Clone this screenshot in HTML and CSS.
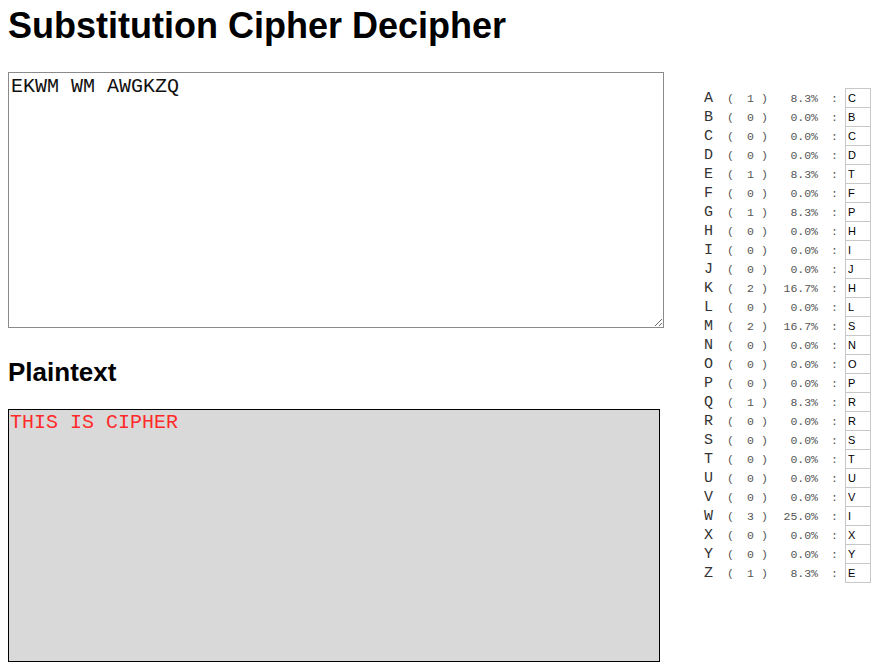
FILE: index.html
```html
<!DOCTYPE html>
<html>
<head>
<meta charset="utf-8">
<title>Substitution Cipher Decipher</title>
<link rel="stylesheet" href="styles.css">
</head>
<body>
<div class="page">
  <div class="main">
    <h1 class="title">Substitution Cipher Decipher</h1>
    <textarea class="cipher" spellcheck="false">EKWM WM AWGKZQ</textarea>
    <h2 class="subtitle">Plaintext</h2>
    <div class="plain">THIS IS CIPHER</div>
  </div>
  <div class="side" id="side"></div>
</div>
<script>
(function(){
  var rows = [
    ["A",1,"8.3%","C"],["B",0,"0.0%","B"],["C",0,"0.0%","C"],["D",0,"0.0%","D"],
    ["E",1,"8.3%","T"],["F",0,"0.0%","F"],["G",1,"8.3%","P"],["H",0,"0.0%","H"],
    ["I",0,"0.0%","I"],["J",0,"0.0%","J"],["K",2,"16.7%","H"],["L",0,"0.0%","L"],
    ["M",2,"16.7%","S"],["N",0,"0.0%","N"],["O",0,"0.0%","O"],["P",0,"0.0%","P"],
    ["Q",1,"8.3%","R"],["R",0,"0.0%","R"],["S",0,"0.0%","S"],["T",0,"0.0%","T"],
    ["U",0,"0.0%","U"],["V",0,"0.0%","V"],["W",3,"25.0%","I"],["X",0,"0.0%","X"],
    ["Y",0,"0.0%","Y"],["Z",1,"8.3%","E"]
  ];
  var side = document.getElementById("side");
  rows.forEach(function(r){
    var row = document.createElement("div");
    row.className = "row";
    row.innerHTML =
      '<span class="letter">'+r[0]+'</span>'+
      '<span class="paren">(</span>'+
      '<span class="count">'+r[1]+'</span>'+
      '<span class="paren2">)</span>'+
      '<span class="pct">'+r[2]+'</span>'+
      '<span class="colon">:</span>'+
      '<input class="map" type="text" value="'+r[3]+'">';
    side.appendChild(row);
  });
})();
</script>
</body>
</html>
```

FILE: styles.css
```css
html, body {
  margin: 0;
  padding: 0;
  background: #fff;
}
.page {
  display: flex;
  padding: 0 8px;
  gap: 40px;
}
.main {
  width: 656px;
  display: flex;
  flex-direction: column;
}
.title {
  font-family: "Liberation Sans", Arial, sans-serif;
  font-weight: bold;
  font-size: 36px;
  line-height: 40px;
  margin: 6px 0 26px;
  color: #000;
}
.cipher {
  box-sizing: border-box;
  width: 656px;
  height: 256px;
  margin: 0;
  padding: 2px;
  border: 1px solid #8a8a8a;
  font-family: "Liberation Mono", "Courier New", monospace;
  font-size: 20px;
  color: #111;
  resize: both;
  outline: none;
}
.subtitle {
  font-family: "Liberation Sans", Arial, sans-serif;
  font-weight: bold;
  font-size: 26px;
  line-height: 30px;
  margin: 29px 0 22px;
  color: #000;
}
.plain {
  box-sizing: border-box;
  width: 652px;
  height: 253px;
  border: 1px solid #000;
  background: #d9d9d9;
  padding: 2px 1px;
  font-family: "Liberation Mono", "Courier New", monospace;
  font-size: 20px;
  line-height: 22px;
  color: #ff2a2a;
}
.side {
  padding-top: 89px;
  display: flex;
  flex-direction: column;
}
.row {
  display: flex;
  align-items: center;
  height: 19px;
  font-family: "Liberation Mono", "Courier New", monospace;
  font-size: 11.5px;
  color: #555;
}
.letter {
  width: 23px;
  font-size: 15px;
  color: #333;
}
.paren { width: 20px; }
.count { width: 14px; }
.paren2 { width: 7px; }
.pct {
  width: 50px;
  text-align: right;
}
.colon {
  width: 27px;
  padding-left: 13px;
  box-sizing: border-box;
}
.map {
  box-sizing: border-box;
  width: 26px;
  height: 20px;
  margin: -1px 0 0;
  padding: 0 0 0 2px;
  border: 1px solid #c8c8c8;
  font-family: "Liberation Sans", Arial, sans-serif;
  font-size: 11px;
  color: #000;
  background: #fff;
  outline: none;
}
```
